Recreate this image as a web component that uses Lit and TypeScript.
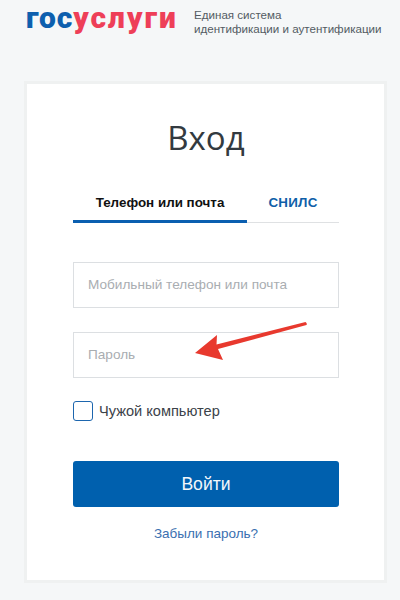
import { LitElement, html, css } from "lit";
import { customElement } from "lit/decorators.js";

@customElement("app-root")
export class AppRoot extends LitElement {
  static styles = css`
    :host {
      display: block;
      width: 400px;
      height: 600px;
      overflow: hidden;
      background: #f5f7f8;
      font-family: "Liberation Sans", Arial, sans-serif;
      color: #333;
      position: relative;
    }
    .header {
      display: flex;
      height: 81px;
      box-sizing: border-box;
      padding: 0 0 0 26px;
      align-items: flex-start;
    }
    .logo {
      font-family: Roboto, sans-serif;
      font-weight: 900;
      font-size: 30px;
      line-height: 36px;
      margin-top: 0;
      width: 168px;
      flex: none;
      white-space: nowrap;
    }
    .logo .a { color: #0d5fae; letter-spacing: 0.8px; }
    .logo .b { color: #ee3f58; letter-spacing: 2px; }
    .tag {
      font-size: 11.6px;
      line-height: 14px;
      color: #535b63;
      padding-top: 8px;
      white-space: nowrap;
    }
    .card {
      height: 496px;
      box-sizing: content-box;
      background: #fff;
      border: 3px solid #eff1f1;
      margin-left: 24px;
      display: flex;
      flex-direction: column;
      padding: 0 0 0 46px;
      width: 311px;
      align-items: stretch;
    }
    h1 {
      margin: 34px 0 0;
      padding-right: 45px;
      font-family: "Open Sans", sans-serif;
      font-weight: 400;
      font-size: 33px;
      line-height: 40px;
      text-align: center;
      color: #333a40;
    }
    .tabs {
      width: 266px;
      display: flex;
      margin-top: 37px;
      height: 28px;
      border-bottom: 1px solid #dfe1e3;
      box-sizing: border-box;
      font-size: 13.4px;
      font-weight: 700;
    }
    .tab {
      text-align: center;
      line-height: 15px;
      box-sizing: border-box;
    }
    .tab.on {
      width: 174px;
      color: #111;
      height: 28px;
      border-bottom: 3px solid #0b5fb0;
    }
    .tab.off {
      flex: 1;
      color: #0f5fa8;
      letter-spacing: 0.2px;
    }
    .field {
      width: 266px;
      height: 46px;
      box-sizing: border-box;
      border: 1px solid #dcdfe2;
      font-size: 13.6px;
      line-height: 44px;
      padding-left: 14px;
      color: #a9adb1;
      background: #fff;
    }
    .f1 { margin-top: 39px; }
    .f2 { margin-top: 24px; }
    .check {
      display: flex;
      align-items: center;
      gap: 6px;
      margin-top: 23px;
      font-size: 14.6px;
      color: #3b4249;
    }
    .box {
      width: 20px;
      height: 20px;
      box-sizing: border-box;
      border: 1.5px solid #1d66ae;
      border-radius: 3px;
      flex: none;
      background: #fff;
    }
    .btn {
      width: 266px;
      height: 46px;
      margin-top: 40px;
      background: #0060ae;
      border-radius: 3px;
      color: #f2f7fb;
      font-size: 17.6px;
      line-height: 46px;
      text-align: center;
    }
    .forgot {
      width: 266px;
      text-align: center;
      margin-top: 19px;
      font-size: 13.5px;
      line-height: 16px;
      color: #3a6fb0;
    }
    .arrow {
      position: absolute;
      left: 190px;
      top: 318px;
      width: 120px;
      height: 44px;
    }
  `;

  render() {
    return html`
      <div class="header">
        <div class="logo"><span class="a">гос</span><span class="b">услуги</span></div>
        <div class="tag">Единая система<br />идентификации и аутентификации</div>
      </div>
      <div class="card">
        <h1>Вход</h1>
        <div class="tabs">
          <div class="tab on">Телефон или почта</div>
          <div class="tab off">СНИЛС</div>
        </div>
        <div class="field f1">Мобильный телефон или почта</div>
        <div class="field f2">Пароль</div>
        <div class="check"><span class="box"></span><span>Чужой компьютер</span></div>
        <div class="btn">Войти</div>
        <div class="forgot">Забыли пароль?</div>
      </div>
      <svg class="arrow" viewBox="190 318 120 44">
        <path d="M195 353 L217 335 L216.5 344.5 L305.5 322 Q307.5 323.5 306.5 325 L218 349 L223 360 Z" fill="#e8392e" />
      </svg>
    `;
  }
}
